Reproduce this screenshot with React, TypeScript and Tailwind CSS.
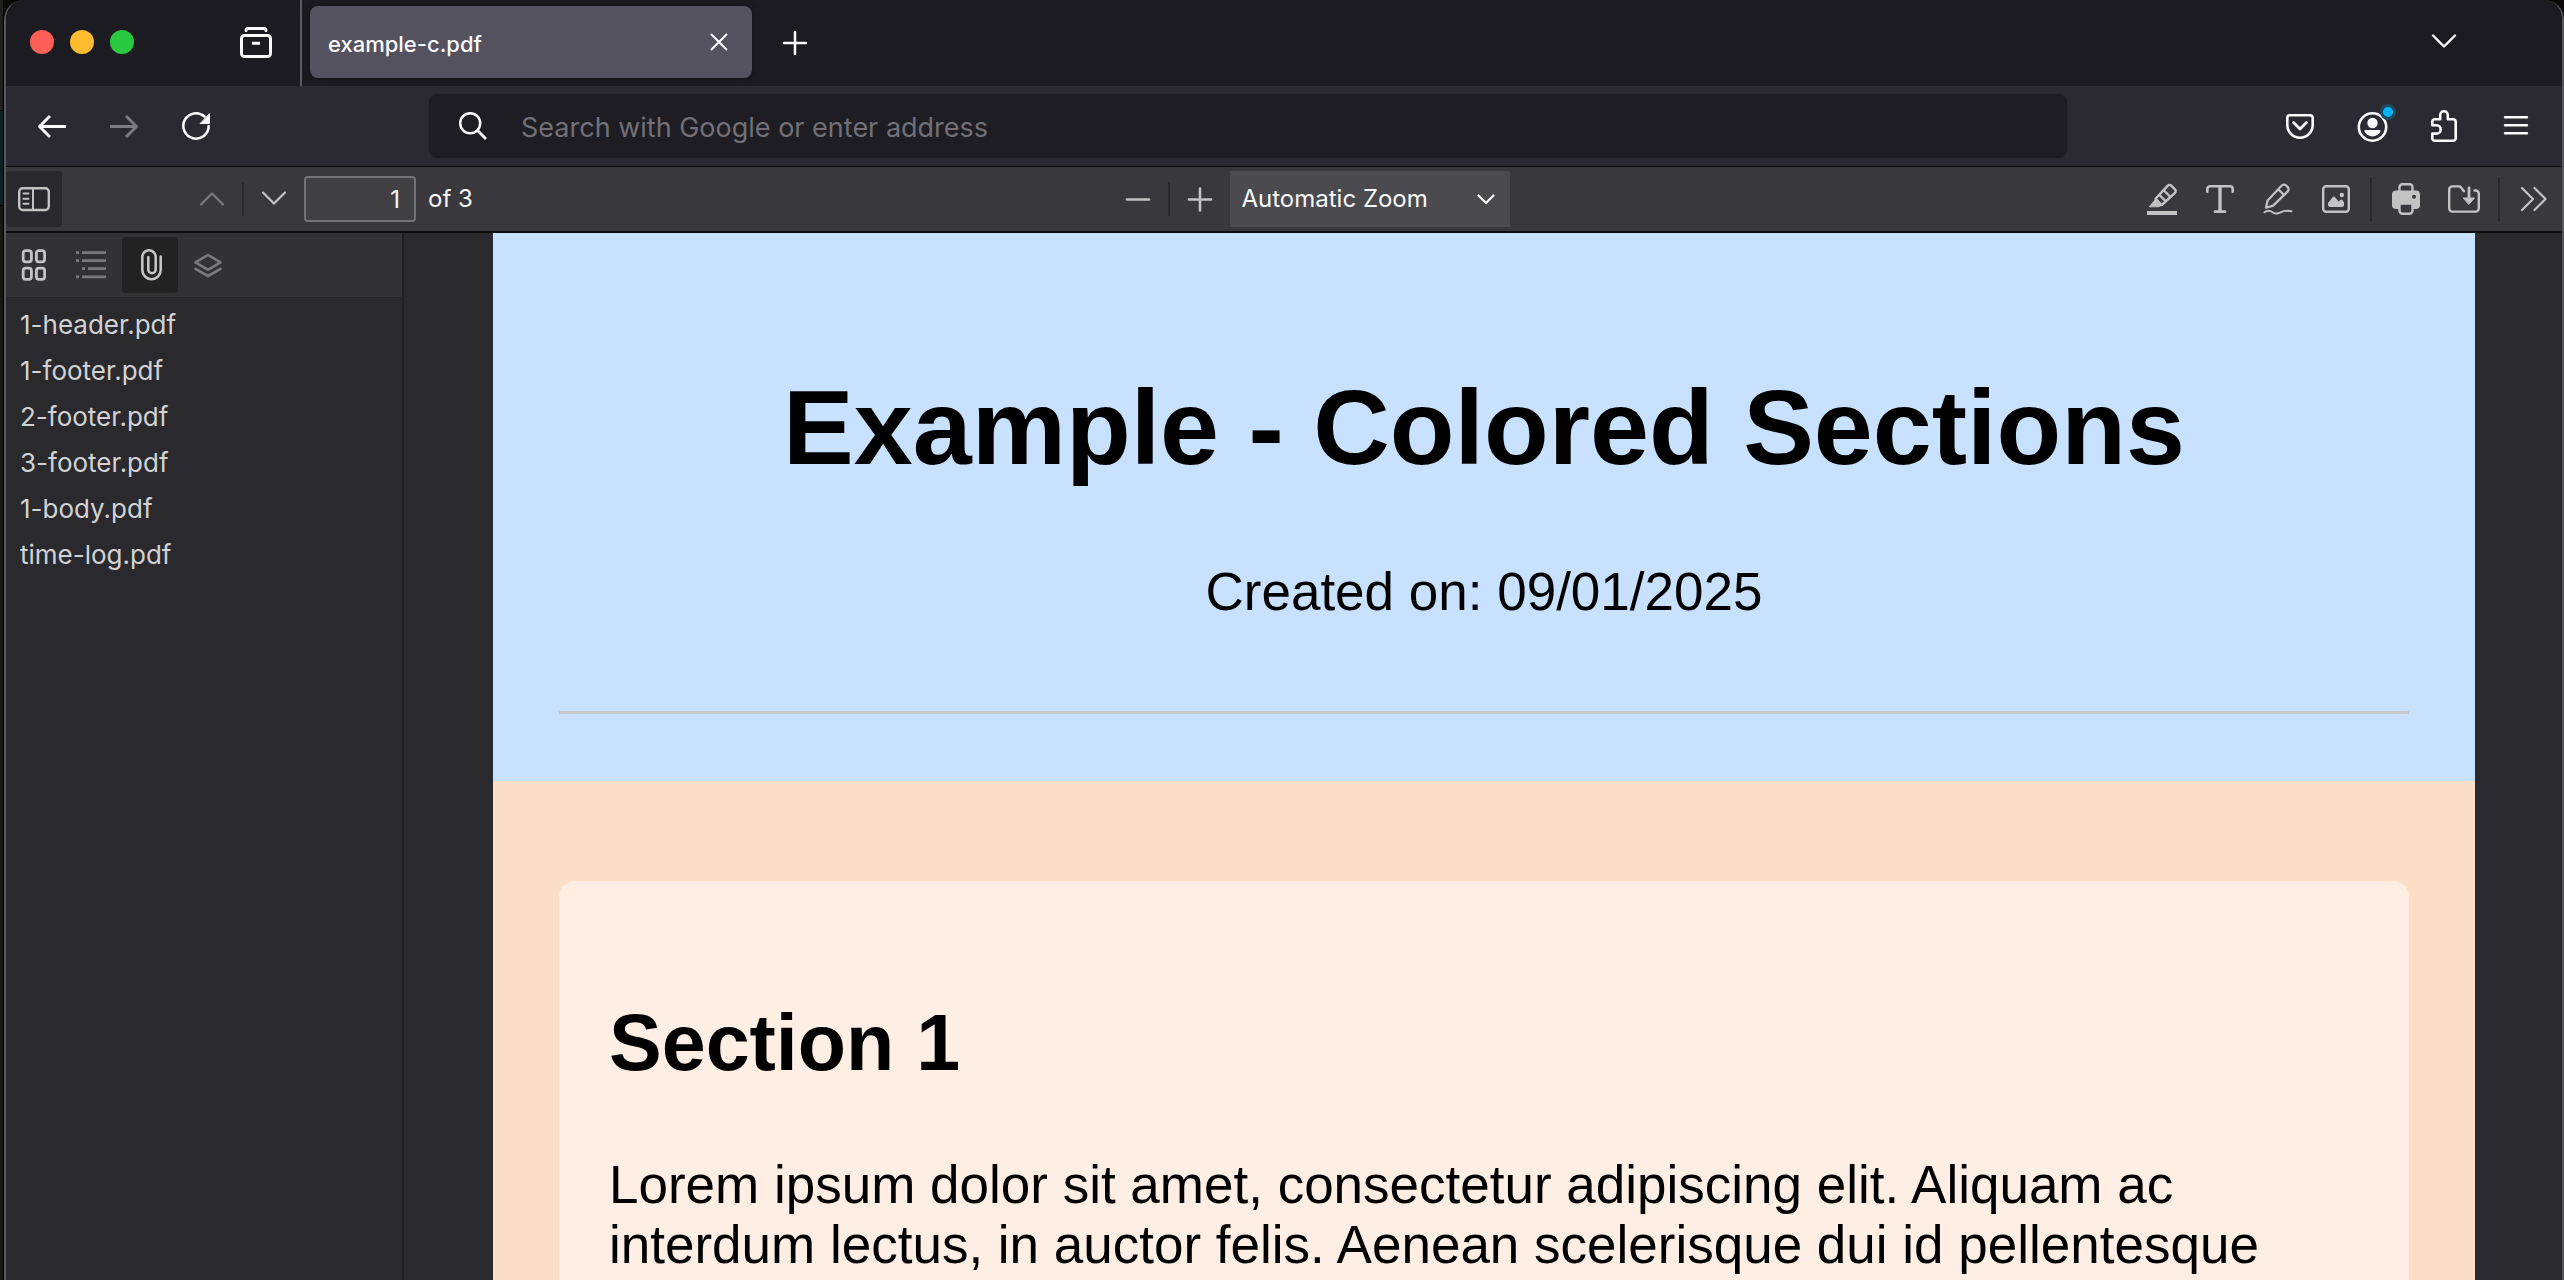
import type { ReactNode } from "react";

function Icon({ children, size = "size-8" }: { children: ReactNode; size?: string }) {
  return (
    <svg
      viewBox="0 0 32 32"
      className={`${size} shrink-0`}
      fill="none"
      stroke="currentColor"
      strokeWidth="2.4"
      strokeLinecap="round"
      strokeLinejoin="round"
      aria-hidden="true"
    >
      {children}
    </svg>
  );
}

function NavButton({ label, children, dim = false }: { label: string; children: ReactNode; dim?: boolean }) {
  return (
    <button
      type="button"
      aria-label={label}
      disabled={dim}
      className={`relative flex h-16 w-18 shrink-0 items-center justify-center ${dim ? "text-[#7b7a80]" : "text-[#fbfbfe]"}`}
    >
      {children}
    </button>
  );
}

function ToolButton({
  label,
  children,
  dim = false,
  active = "",
}: {
  label: string;
  children: ReactNode;
  dim?: boolean;
  active?: string;
}) {
  return (
    <button
      type="button"
      aria-label={label}
      disabled={dim}
      className={`flex size-14 shrink-0 items-center justify-center rounded ${active} ${dim ? "text-[#7b7b7d]" : "text-[#c3c3c4]"}`}
    >
      {children}
    </button>
  );
}

function TabStrip() {
  return (
    <header className="flex h-[86px] shrink-0 bg-[#1c1b22]">
      <div className="flex items-center gap-4 pb-0.5 pl-6">
        <button type="button" aria-label="Close window" className="size-6 rounded-full bg-[#ff5f57]" />
        <button type="button" aria-label="Minimize window" className="size-6 rounded-full bg-[#febc2e]" />
        <button type="button" aria-label="Full screen" className="size-6 rounded-full bg-[#28c840]" />
      </div>
      <div className="ml-[86px] flex items-center pr-2 pb-0.5">
        <NavButton label="Firefox View">
          <Icon>
            <g strokeWidth="3">
              <path d="M6 4.6C6 3.3 6.8 2.6 8 2.6h16c1.200 0 2 .7 2 2" />
              <rect x="1.500" y="9.500" width="29" height="21" rx="3" />
              <path d="M12 17.300h8" strokeLinecap="butt" />
            </g>
          </Icon>
        </NavButton>
      </div>
      <div className="w-0.5 bg-[#5b5a63]" />
      <div className="ml-2 mt-1.5 flex h-18 w-[442px] items-center justify-between rounded-lg bg-[#54525e] pl-[18px] pr-[17px] shadow-[0_0_6px_rgba(0,0,0,0.5)]">
        <span className="pt-1 text-[22px] leading-8 font-medium text-[#fbfbfe]">example-c.pdf</span>
        <button type="button" aria-label="Close tab" className="text-[#fbfbfe]">
          <Icon>
            <path d="M8.500 8.500l15 15M23.500 8.500l-15 15" strokeWidth="2" />
          </Icon>
        </button>
      </div>
      <div className="flex flex-1 items-center justify-between pl-[7px] pr-[82px]">
        <NavButton label="New tab">
          <Icon>
            <path d="M16 5v22M5 16h22" strokeWidth="2.500" />
          </Icon>
        </NavButton>
        <NavButton label="List all tabs">
          <Icon>
            <path d="M5 8.500l11 11 11-11" />
          </Icon>
        </NavButton>
      </div>
    </header>
  );
}

function NavBar() {
  return (
    <nav className="flex h-20 shrink-0 items-center bg-[#2b2a33] px-2.5">
      <NavButton label="Back">
        <Icon>
          <path d="M30 16.500H3.500M14 6L3.500 16.500 14 27" strokeWidth="2.900" strokeLinecap="butt" />
        </Icon>
      </NavButton>
      <NavButton label="Forward" dim>
        <Icon>
          <path d="M2 16.500h26.500M18 6l10.500 10.500L18 27" strokeWidth="2.900" strokeLinecap="butt" />
        </Icon>
      </NavButton>
      <NavButton label="Reload">
        <Icon>
          <path d="M28.700 16A12.700 12.700 0 1 1 24.500 6.500" strokeWidth="2.600" />
          <path d="M29.500 4v9.500H20.500z" fill="currentColor" strokeWidth="1" />
        </Icon>
      </NavButton>
      <label className="mx-[197px] flex h-16 flex-1 items-center rounded-lg bg-[#1e1d24] pl-7 text-[#fbfbfe]">
        <Icon>
          <circle cx="13.200" cy="13.200" r="10" strokeWidth="2.500" />
          <path d="M20.500 20.500l8.500 8.500" strokeWidth="2.800" strokeLinecap="butt" />
        </Icon>
        <input
          type="text"
          aria-label="Address"
          placeholder="Search with Google or enter address"
          className="ml-8 h-16 min-w-0 flex-1 bg-transparent pt-0.5 text-[27px] outline-none placeholder:text-[#717076]"
        />
      </label>
      <NavButton label="Save to Pocket">
        <Icon>
          <path d="M6 5.300h20A2.700 2.700 0 0 1 28.700 8v7a12.700 12.700 0 0 1-25.400 0V8A2.700 2.700 0 0 1 6 5.300z" strokeWidth="2.600" />
          <path d="M9.500 12.500l6.500 6.500 6.500-6.500" strokeWidth="2.800" />
        </Icon>
      </NavButton>
      <NavButton label="Account">
        <Icon>
          <circle cx="16.500" cy="17" r="13.700" strokeWidth="2.600" />
          <circle cx="16.500" cy="13" r="5.200" fill="currentColor" stroke="none" />
          <path d="M9.500 20h14c1 0 1.500.8 1 1.600-1.600 2.700-4.600 4.900-8 4.900s-6.400-2.200-8-4.900c-.5-.8 0-1.600 1-1.600z" fill="currentColor" stroke="none" />
        </Icon>
        <span className="absolute top-2.5 right-3 size-4 rounded-full border-3 border-[#1d4a5f] bg-[#00b3f4]" />
      </NavButton>
      <NavButton label="Extensions">
        <Icon>
          <path
            d="M4.300 15.200v-3.400a2.500 2.500 0 0 1 2.500-2.500h5.400V5a3.800 3.800 0 0 1 7.600 0v4.300h5.400a2.500 2.500 0 0 1 2.500 2.500v16.400a2.500 2.500 0 0 1-2.500 2.500H6.800a2.500 2.500 0 0 1-2.500-2.500V23.600h4.200a4.200 4.200 0 0 0 0-8.400z"
            strokeWidth="2.600"
          />
        </Icon>
      </NavButton>
      <NavButton label="Open menu">
        <Icon>
          <path d="M5 7.200h22M5 15.200h22M5 23.200h22" />
        </Icon>
      </NavButton>
    </nav>
  );
}

function Separator({ tall = false }: { tall?: boolean }) {
  return <div className={`w-0.5 shrink-0 bg-[#29292d] ${tall ? "mx-1 h-11" : "h-[34px]"}`} />;
}

function PdfToolbar() {
  return (
    <div className="flex h-[67px] shrink-0 items-center justify-between border-t border-b-2 border-[#0c0c0d] bg-[#38383d]">
      <div className="flex w-[479px] items-center gap-0.5">
        <ToolButton label="Toggle sidebar" active="bg-[#29292d]">
          <Icon>
            <rect x="1.200" y="5.200" width="29.600" height="21.800" rx="3.500" />
            <path d="M15 5.200V27" strokeWidth="2" />
            <path d="M5.500 10.500h5M5.500 15.700h5M5.500 20.700h5" strokeWidth="2" />
          </Icon>
        </ToolButton>
        <div className="w-[118px] shrink-0" />
        <ToolButton label="Previous page" dim>
          <Icon>
            <path d="M5 21.500l11-11 11 11" strokeWidth="2.200" />
          </Icon>
        </ToolButton>
        <Separator />
        <ToolButton label="Next page">
          <Icon>
            <path d="M5 9.500l11 11 11-11" strokeWidth="2.200" />
          </Icon>
        </ToolButton>
        <input
          type="text"
          aria-label="Page"
          defaultValue="1"
          className="h-[46px] w-28 shrink-0 rounded border-2 border-[#737375] bg-[#414045] pr-3.5 text-right text-[24px] text-[#f9f9fa] outline-none"
        />
        <span className="ml-2.5 text-[24px] leading-8 whitespace-nowrap text-[#f9f9fa]">of 3</span>
      </div>
      <div className="flex items-center gap-0.5">
        <ToolButton label="Zoom out">
          <Icon>
            <path d="M5 16.500h22" strokeWidth="2.600" />
          </Icon>
        </ToolButton>
        <Separator />
        <ToolButton label="Zoom in">
          <Icon>
            <path d="M5 16.500h22M16 5.500v22" strokeWidth="2.600" />
          </Icon>
        </ToolButton>
        <div className="relative flex items-center">
          <select
            aria-label="Zoom"
            className="h-14 w-[280px] appearance-none bg-[#4a4a4f] pl-3 text-[24px] text-[#f9f9fa] outline-none"
          >
            <option>Automatic Zoom</option>
            <option>Actual Size</option>
            <option>Page Fit</option>
            <option>Page Width</option>
          </select>
          <span className="pointer-events-none absolute right-2 text-[#f9f9fa]">
            <Icon>
              <path d="M8.500 12.500l7.500 7.500 7.500-7.500" strokeWidth="2.200" />
            </Icon>
          </span>
        </div>
      </div>
      <div className="flex items-center gap-0.5">
        <ToolButton label="Highlight">
          <Icon>
            <path d="M1 30h30" strokeWidth="4" strokeLinecap="butt" />
            <path d="M9.500 15.800L21.800 2.600a2.400 2.400 0 0 1 3.400 0l3.800 3.800a2.400 2.400 0 0 1 0 3.400L15.800 22z" />
            <path d="M18 7.500l6.500 6.500M13.500 12l6 6" />
            <path d="M3.500 23.500L9 17l6 5.500-1.500 1z" fill="currentColor" strokeWidth="1" />
          </Icon>
        </ToolButton>
        <ToolButton label="Text">
          <Icon>
            <path d="M3.300 8.700V6A2.700 2.700 0 0 1 6 3.300h20A2.700 2.700 0 0 1 28.700 6v2.700" strokeWidth="2.600" />
            <path d="M16 3.300v25" strokeWidth="3.400" strokeLinecap="butt" />
            <path d="M11 28.600h10" strokeWidth="2.800" />
          </Icon>
        </ToolButton>
        <ToolButton label="Draw">
          <Icon>
            <path d="M4 24.800l1.600-7.300L19.800 2.500a3 3 0 0 1 4.300 0l1.600 1.600a3 3 0 0 1 0 4.300L11.200 22.600z" strokeWidth="2.200" />
            <path d="M16.500 6.500l5.500 5.500" strokeWidth="2.200" />
            <path d="M2.500 29.300c3.500-2.500 6-1.500 8 0s5 1.500 8 0 6-2 11-1" strokeWidth="2" />
          </Icon>
        </ToolButton>
        <ToolButton label="Add image">
          <Icon>
            <rect x="3.200" y="3.200" width="25.600" height="25.600" rx="3" />
            <path d="M8 20l5-6.200q.8-.8 1.600 0l4 4.700 2-1.800q.7-.6 1.400 0L24 19.200V22a2 2 0 0 1-2 2H10a2 2 0 0 1-2-2z" fill="currentColor" stroke="none" />
            <circle cx="21.800" cy="12" r="2.200" fill="currentColor" stroke="none" />
          </Icon>
        </ToolButton>
        <Separator tall />
        <ToolButton label="Print">
          <Icon>
            <path d="M9.500 9V4a2.700 2.700 0 0 1 2.700-2.700h7.600A2.700 2.700 0 0 1 22.500 4v5" />
            <path d="M6 7.500h20a4 4 0 0 1 4 4V22a4 4 0 0 1-4 4H6a4 4 0 0 1-4-4V11.500a4 4 0 0 1 4-4z" fill="currentColor" stroke="none" />
            <path d="M9.500 20.500h13v7.300a3 3 0 0 1-3 3h-7a3 3 0 0 1-3-3z" className="fill-[#38383d]" />
            <circle cx="24" cy="13.800" r="2" className="fill-[#38383d]" stroke="none" />
          </Icon>
        </ToolButton>
        <ToolButton label="Save">
          <Icon>
            <path d="M16 8.300L12.800 4.200a2 2 0 0 0-1.600-.8H4.200a3 3 0 0 0-3 3v19.200a3 3 0 0 0 3 3h23.600a3 3 0 0 0 3-3V10.500a3 3 0 0 0-3-3H26.500" />
            <path d="M21 5v11" strokeWidth="2.800" />
            <path d="M15.500 15h11L21 21.200z" fill="currentColor" strokeWidth="1" />
          </Icon>
        </ToolButton>
        <Separator tall />
        <ToolButton label="Tools">
          <Icon>
            <path d="M4 5l11 11L4 27M16.500 5l11 11-11 11" strokeWidth="2.200" />
          </Icon>
        </ToolButton>
      </div>
    </div>
  );
}

const attachments = ["1-header.pdf", "1-footer.pdf", "2-footer.pdf", "3-footer.pdf", "1-body.pdf", "time-log.pdf"];

function Sidebar() {
  return (
    <aside className="w-[398px] shrink-0 border-r-2 border-[#1f1f23] bg-[#2a2a2e]">
      <div className="flex h-[65px] items-center gap-0.5 border-b border-[#252528] bg-[#323234]">
        <ToolButton label="Thumbnails">
          <Icon>
            <g strokeWidth="2.800">
              <rect x="5.200" y="1.600" width="8.200" height="11.200" rx="2.600" />
              <rect x="18.400" y="1.600" width="8.200" height="11.200" rx="2.600" />
              <rect x="5.200" y="19.200" width="8.200" height="11.200" rx="2.600" />
              <rect x="18.400" y="19.200" width="8.200" height="11.200" rx="2.600" />
            </g>
          </Icon>
        </ToolButton>
        <ToolButton label="Document outline" dim>
          <Icon>
            <path
              d="M0 3.700h3M6 3.700h24M0 11.700h3M6 11.700h24M6 19.700h3M12 19.700h18M0 27.900h3M6 27.900h24"
              strokeWidth="2.800"
              strokeLinecap="butt"
            />
          </Icon>
        </ToolButton>
        <ToolButton label="Attachments" active="bg-[#222223]">
          <Icon>
            <path d="M26.700 7.500V21a9.200 9.200 0 0 1-18.400 0V8a6.700 6.700 0 0 1 13.400 0v12.500a3.700 3.700 0 0 1-7.400 0V8" strokeWidth="2.600" />
          </Icon>
        </ToolButton>
        <ToolButton label="Layers" dim>
          <Icon>
            <path d="M16 6L28.500 13.400 16 20.800 3.500 13.400z" strokeWidth="2.600" />
            <path d="M3.500 19.800L16 27l12.500-7.200" strokeWidth="2.600" />
          </Icon>
        </ToolButton>
      </div>
      <ul className="pt-1 pl-3.5">
        {attachments.map((name) => (
          <li key={name}>
            <a href={`#${name}`} className="block text-[26px] leading-[46px] text-[#d2d2d4]">
              {name}
            </a>
          </li>
        ))}
      </ul>
    </aside>
  );
}

function PdfPage() {
  return (
    <main className="flex-1 overflow-hidden bg-[#2a2a2e] pr-[87px] pl-[89px]">
      <article className="min-h-full bg-[#fddfc7] font-['Liberation_Sans',Arial,sans-serif] text-black">
        <header className="bg-[#c8e1ff] px-[66px] pt-[133px] pb-[67px] text-center">
          <h1 className="text-[106px] leading-[122px] font-bold">Example - Colored Sections</h1>
          <p className="mt-[74px] text-[53px] leading-[60px]">Created on: 09/01/2025</p>
          <hr className="mt-[89px] h-[3px] border-0 bg-[#c9c9cb]" />
        </header>
        <div className="px-[66px] pt-[100px]">
          <section className="rounded-2xl bg-[#ffeee3] px-[50px] pt-[116px] pb-16">
            <h2 className="text-[79px] leading-[92px] font-bold">Section 1</h2>
            <p className="mt-[66px] text-[53px] leading-[60px]">
              Lorem ipsum dolor sit amet, consectetur adipiscing elit. Aliquam ac interdum lectus, in auctor felis.
              Aenean scelerisque dui id pellentesque
            </p>
          </section>
        </div>
      </article>
    </main>
  );
}

export default function App() {
  return (
    <div className="flex h-screen overflow-hidden bg-[#0b0a09] font-['Inter',sans-serif]">
      <div className="flex w-1 shrink-0 flex-col border-r border-black bg-[#181613]">
        <div className="h-[110px] bg-[#211f1b]" />
        <div className="h-[96px] border-y border-black bg-[#0e1f24]" />
      </div>
      <div className="flex min-w-0 flex-1 flex-col overflow-hidden rounded-t-[20px] border-x-2 border-[#58575b]">
        <TabStrip />
        <NavBar />
        <PdfToolbar />
        <div className="flex min-h-0 flex-1">
          <Sidebar />
          <PdfPage />
        </div>
      </div>
    </div>
  );
}
